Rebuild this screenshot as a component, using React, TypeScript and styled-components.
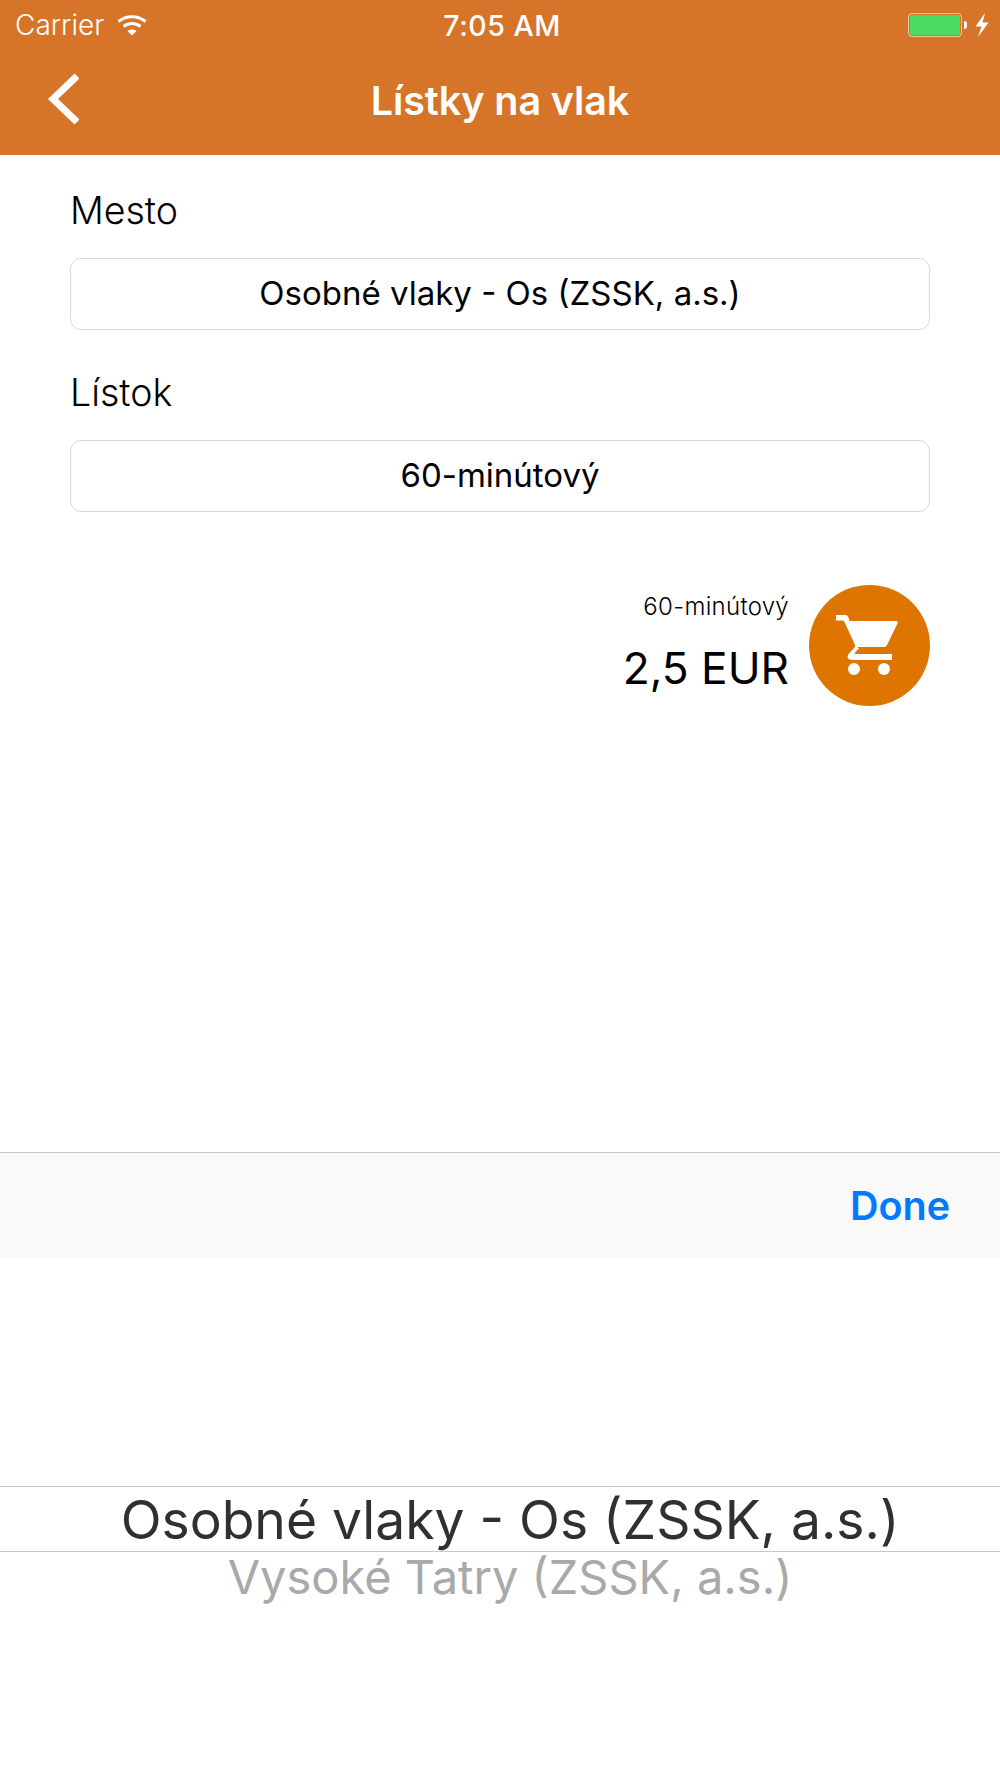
import React from "react";
import styled, { createGlobalStyle } from "styled-components";

const GlobalStyle = createGlobalStyle`
  html, body {
    margin: 0;
    padding: 0;
    background: #fff;
  }
  body {
    font-family: Inter, "Liberation Sans", sans-serif;
  }
`;

const Screen = styled.div`
  width: 1000px;
  height: 1778px;
  display: flex;
  flex-direction: column;
  overflow: hidden;
  background: #fff;
`;

const Header = styled.header`
  height: 155px;
  flex: none;
  background: #d6752a;
  color: #fff;
  display: flex;
  flex-direction: column;
`;

const StatusBar = styled.div`
  height: 50px;
  padding: 0 11px 0 15px;
  display: flex;
  align-items: center;
  justify-content: space-between;
`;

const StatusSide = styled.div<{ $gap: number; $end?: boolean }>`
  width: 200px;
  display: flex;
  align-items: center;
  gap: ${(p) => p.$gap}px;
  justify-content: ${(p) => (p.$end ? "flex-end" : "flex-start")};
`;

const Carrier = styled.span`
  font-size: 28px;
  font-weight: 300;
`;

const Clock = styled.span`
  font-size: 28.5px;
  font-weight: 500;
  letter-spacing: 0.5px;
`;

const BatteryShell = styled.div`
  width: 54px;
  height: 24px;
  box-sizing: border-box;
  border: 1px solid #f3c9a5;
  border-radius: 4px;
  padding: 1px;
  display: flex;
`;

const BatteryFill = styled.div`
  flex: 1;
  background: #4cd964;
  border-radius: 2px;
`;

const BatteryCap = styled.div`
  width: 3px;
  height: 8px;
  margin-left: -6px;
  background: #fff;
  border-radius: 0 3px 3px 0;
`;

const NavBar = styled.div`
  position: relative;
  flex: 1;
  display: flex;
  align-items: center;
  justify-content: center;
  padding-bottom: 4px;
`;

const BackIcon = styled.svg`
  position: absolute;
  left: 47px;
  top: 22px;
`;

const Title = styled.h1`
  margin: 0;
  font-size: 39.5px;
  font-weight: 600;
  letter-spacing: -0.1px;
`;

const Form = styled.main`
  height: 997px;
  flex: none;
  box-sizing: border-box;
  padding: 33px 70px 0;
  display: flex;
  flex-direction: column;
`;

const Label = styled.div`
  font-size: 37.5px;
  font-weight: 300;
  line-height: 46px;
  color: #000;
  margin-bottom: 24px;
`;

const Field = styled.div`
  height: 72px;
  box-sizing: border-box;
  border: 1px solid #d9d9d9;
  border-radius: 11px;
  padding-bottom: 3px;
  display: flex;
  align-items: center;
  justify-content: center;
  font-size: 33px;
  font-weight: 400;
  color: #000;
  margin-bottom: 40px;
`;

const PriceRow = styled.div`
  margin-top: 33px;
  display: flex;
  justify-content: flex-end;
  align-items: center;
  gap: 20px;
`;

const PriceText = styled.div`
  display: flex;
  flex-direction: column;
  align-items: flex-end;
  padding-bottom: 7px;
`;

const PriceName = styled.div`
  font-size: 24px;
  font-weight: 300;
  letter-spacing: 0.3px;
  line-height: 32px;
  margin-bottom: 19px;
`;

const PriceValue = styled.div`
  font-size: 44.2px;
  font-weight: 400;
  line-height: 52px;
`;

const CartButton = styled.div`
  width: 121px;
  height: 121px;
  border-radius: 50%;
  background: #dd7500;
  display: flex;
  align-items: center;
  justify-content: center;
  padding: 0 6px 2px 0;
  box-sizing: border-box;
`;

const Toolbar = styled.div`
  height: 106px;
  flex: none;
  box-sizing: border-box;
  border-top: 1px solid #c8c8c8;
  background: #f9f9f9;
  display: flex;
  align-items: center;
  justify-content: flex-end;
  padding-right: 50px;
`;

const DoneButton = styled.span`
  font-size: 39.5px;
  font-weight: 600;
  color: #007aff;
`;

const Picker = styled.div`
  flex: 1;
  padding-top: 228px;
  display: flex;
  flex-direction: column;
  align-items: center;
`;

const SelectedRow = styled.div`
  align-self: stretch;
  height: 66px;
  box-sizing: border-box;
  border-top: 1px solid #c8c8c8;
  border-bottom: 1px solid #c8c8c8;
  padding-left: 20px;
  display: flex;
  align-items: center;
  justify-content: center;
  font-size: 53.4px;
  font-weight: 400;
  color: #303030;
`;

const NextRow = styled.div`
  font-size: 47px;
  font-weight: 400;
  line-height: 50px;
  color: #a9a9a9;
  margin-left: 20px;
`;

function Wifi() {
  return (
    <svg width="30" height="22" viewBox="0 0 30 22" fill="none" stroke="#fff">
      <path d="M1.5 7.5C9 1 21 1 28.5 7.5" strokeWidth="3" />
      <path d="M6.5 12.5C11.5 8.5 18.5 8.5 23.5 12.5" strokeWidth="3" />
      <path d="M10.5 17L15 21.5L19.5 17C17 15 13 15 10.5 17Z" fill="#fff" stroke="none" />
    </svg>
  );
}

function Bolt() {
  return (
    <svg width="14" height="24" viewBox="0 0 14 24">
      <path d="M10 0L0.5 13.5H6.5L3 24L13.5 9.5H7.5L10 0Z" fill="#fff" />
    </svg>
  );
}

function Cart() {
  return (
    <svg width="62" height="62" viewBox="0 0 62 62" fill="#fff">
      <path d="M0 1H9.5C11 1 12 2 12.5 3.5L14 8H8L7.5 6.5H0Z" />
      <path d="M8 7H60C61.5 7 62 8 61.5 9.5L51 31C50.3 32.5 49 33 47.5 33H20Z" />
      <path d="M19 31L23 34.5L19 38.5C18 39.5 18.5 40 19.5 40H56V46H16C12 46 10.5 42.5 12.5 40L19 33Z" />
      <circle cx="18" cy="55" r="6" />
      <circle cx="48" cy="55" r="6" />
    </svg>
  );
}

export default function App() {
  return (
    <Screen>
      <GlobalStyle />
      <Header>
        <StatusBar>
          <StatusSide $gap={13}>
            <Carrier>Carrier</Carrier>
            <Wifi />
          </StatusSide>
          <Clock>7:05 AM</Clock>
          <StatusSide $gap={8} $end>
            <BatteryShell>
              <BatteryFill />
            </BatteryShell>
            <BatteryCap />
            <Bolt />
          </StatusSide>
        </StatusBar>
        <NavBar>
          <BackIcon width="32" height="54" viewBox="0 0 32 54" fill="none" stroke="#fff" strokeWidth="7">
            <path d="M30 4L6 27L30 50" />
          </BackIcon>
          <Title>Lístky na vlak</Title>
        </NavBar>
      </Header>
      <Form>
        <Label>Mesto</Label>
        <Field>Osobné vlaky - Os (ZSSK, a.s.)</Field>
        <Label>Lístok</Label>
        <Field>60-minútový</Field>
        <PriceRow>
          <PriceText>
            <PriceName>60-minútový</PriceName>
            <PriceValue>2,5 EUR</PriceValue>
          </PriceText>
          <CartButton>
            <Cart />
          </CartButton>
        </PriceRow>
      </Form>
      <Toolbar>
        <DoneButton>Done</DoneButton>
      </Toolbar>
      <Picker>
        <SelectedRow>Osobné vlaky - Os (ZSSK, a.s.)</SelectedRow>
        <NextRow>Vysoké Tatry (ZSSK, a.s.)</NextRow>
      </Picker>
    </Screen>
  );
}
